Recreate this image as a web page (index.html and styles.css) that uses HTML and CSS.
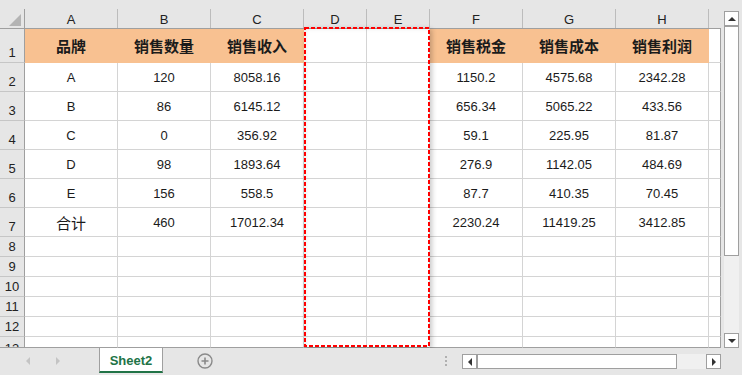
FILE: index.html
```html
<!DOCTYPE html>
<html lang="zh-CN">
<head>
    <meta charset="UTF-8">
    <title>Sheet2</title>
    <link rel="stylesheet" href="styles.css">
</head>
<body>

<div class="app">
    <div class="main">
        <div class="sheet">
            <!-- column letters -->
            <div class="colhead">
                <div class="corner"><span class="corner-tri"></span></div>
                <div>A</div><div>B</div><div>C</div><div>D</div><div>E</div>
                <div>F</div><div>G</div><div>H</div><div></div>
            </div>

            <div class="row r1">
                <div class="rh">1</div>
                <div class="hd">品牌</div>
                <div class="hd">销售数量</div>
                <div class="hd">销售收入</div>
                <div></div><div></div>
                <div class="hd">销售税金</div>
                <div class="hd">销售成本</div>
                <div class="hd">销售利润</div>
                <div></div>
            </div>
            <div class="row">
                <div class="rh">2</div><div>A</div><div>120</div><div>8058.16</div><div></div><div></div>
                <div>1150.2</div><div>4575.68</div><div>2342.28</div><div></div>
            </div>
            <div class="row">
                <div class="rh">3</div><div>B</div><div>86</div><div>6145.12</div><div></div><div></div>
                <div>656.34</div><div>5065.22</div><div>433.56</div><div></div>
            </div>
            <div class="row">
                <div class="rh">4</div><div>C</div><div>0</div><div>356.92</div><div></div><div></div>
                <div>59.1</div><div>225.95</div><div>81.87</div><div></div>
            </div>
            <div class="row">
                <div class="rh">5</div><div>D</div><div>98</div><div>1893.64</div><div></div><div></div>
                <div>276.9</div><div>1142.05</div><div>484.69</div><div></div>
            </div>
            <div class="row">
                <div class="rh">6</div><div>E</div><div>156</div><div>558.5</div><div></div><div></div>
                <div>87.7</div><div>410.35</div><div>70.45</div><div></div>
            </div>
            <div class="row">
                <div class="rh">7</div><div class="cjk">合计</div><div>460</div><div>17012.34</div><div></div><div></div>
                <div>2230.24</div><div>11419.25</div><div>3412.85</div><div></div>
            </div>
            <div class="row sm"><div class="rh">8</div><div></div><div></div><div></div><div></div><div></div><div></div><div></div><div></div><div></div></div>
            <div class="row sm"><div class="rh">9</div><div></div><div></div><div></div><div></div><div></div><div></div><div></div><div></div><div></div></div>
            <div class="row sm"><div class="rh">10</div><div></div><div></div><div></div><div></div><div></div><div></div><div></div><div></div><div></div></div>
            <div class="row sm"><div class="rh">11</div><div></div><div></div><div></div><div></div><div></div><div></div><div></div><div></div><div></div></div>
            <div class="row sm"><div class="rh">12</div><div></div><div></div><div></div><div></div><div></div><div></div><div></div><div></div><div></div></div>
            <div class="row cut"><div class="rh">13</div><div></div><div></div><div></div><div></div><div></div><div></div><div></div><div></div><div></div></div>

            <!-- copied range D:E -->
            <div class="copy-box">
                <svg width="126" height="320" viewBox="0 0 126 320">
                    <rect x="1" y="1" width="124" height="318" fill="none" stroke="#ff0000" stroke-width="2" stroke-dasharray="4 2"/>
                </svg>
            </div>
        </div>

        <div class="vscroll">
            <div class="sb-btn"><span class="tri-up"></span></div>
            <div class="v-thumb"></div>
            <div class="v-track"></div>
            <div class="sb-btn"><span class="tri-down"></span></div>
        </div>
    </div>

    <div class="tabbar">
        <div class="nav">
            <span class="nav-left"></span>
            <span class="nav-right"></span>
        </div>
        <div class="tab">Sheet2</div>
        <div class="add">
            <svg width="16" height="16" viewBox="0 0 16 16">
                <circle cx="8" cy="8" r="7" fill="none" stroke="#8a8a8a" stroke-width="1.4"/>
                <path d="M8 4.5v7M4.5 8h7" stroke="#8a8a8a" stroke-width="1.6"/>
            </svg>
        </div>
        <div class="grip"><span></span><span></span><span></span></div>
        <div class="hscroll">
            <div class="sb-btn"><span class="tri-left"></span></div>
            <div class="h-thumb"></div>
            <div class="h-track"></div>
            <div class="sb-btn"><span class="tri-right"></span></div>
        </div>
    </div>
</div>

</body>
</html>
```

FILE: styles.css
```css
/* Colors */
:root {
    --chrome: #e6e6e6;
    --grid: #d4d4d4;
    --frame: #9f9f9f;
    --head-line: #bcbcbc;
    --peach: #f8c191;
    --excel-green: #217346;
    --cols: 25px 93px 93px 93px 63px 63px 93px 93px 93px 12px;
}

* {
    box-sizing: border-box;
}

body {
    margin: 0;
    background-color: var(--chrome);
    font-family: "Liberation Sans", "Noto Sans CJK SC", sans-serif;
    color: #1b1b1b;
    overflow: hidden;
}

.app {
    width: 742px;
    height: 375px;
    display: flex;
    flex-direction: column;
}

.main {
    display: flex;
    height: 348px;
}

/* Sheet grid */
.sheet {
    position: relative;
    width: 721px;
    height: 348px;
    overflow: hidden;
}

.colhead {
    display: grid;
    grid-template-columns: var(--cols);
    height: 29px;
    border-bottom: 1px solid var(--frame);
}

.colhead > div {
    margin-top: 9px;
    border-right: 1px solid var(--head-line);
    display: flex;
    align-items: center;
    justify-content: center;
    padding-top: 2px;
    font-size: 13px;
    color: #222;
}

.colhead > div:last-child {
    border-right: none;
}

.colhead .corner {
    border-right-color: var(--frame);
    align-items: flex-end;
    justify-content: flex-end;
    padding: 0 3px 2px 0;
}

.corner-tri {
    width: 0;
    height: 0;
    border-left: 12px solid transparent;
    border-bottom: 12px solid #b4b4b4;
}

.row {
    display: grid;
    grid-template-columns: var(--cols);
    height: 29px;
}

.row > div {
    background-color: #fff;
    border-right: 1px solid var(--grid);
    border-bottom: 1px solid var(--grid);
    display: flex;
    align-items: center;
    justify-content: center;
    font-size: 13px;
    white-space: nowrap;
}

.row > div:last-child {
    border-right-color: var(--frame);
}

.row > .rh {
    background-color: var(--chrome);
    border-right-color: var(--frame);
    border-bottom-color: #c6c6c6;
    align-items: flex-end;
    padding-bottom: 2px;
    color: #222;
}

.r1 {
    height: 34px;
}

.row > .hd {
    background-color: var(--peach);
    border-color: var(--peach);
    font-family: "Noto Sans CJK SC", sans-serif;
    font-weight: 700;
    font-size: 15px;
}

.row > .cjk {
    font-family: "Noto Sans CJK SC", sans-serif;
    font-size: 15px;
}

.sm {
    height: 20px;
}

.cut {
    height: 11px;
}

.cut > div {
    overflow: hidden;
    border-bottom-color: var(--frame);
}

.cut > .rh {
    border-bottom-color: var(--frame);
    align-items: flex-start;
    padding: 4px 0 0;
}

/* marching border around copied columns */
.copy-box {
    position: absolute;
    left: 304px;
    top: 27px;
    width: 126px;
    height: 320px;
    box-shadow: 2px 2px 5px rgba(0, 0, 0, 0.22), inset 3px 3px 5px -2px rgba(0, 0, 0, 0.12);
}

.copy-box svg {
    display: block;
}

/* Scrollbars */
.vscroll {
    width: 21px;
    padding: 11px 3px 0;
    display: flex;
    flex-direction: column;
}

.sb-btn {
    width: 15px;
    height: 15px;
    background-color: #fff;
    border: 1px solid var(--frame);
    display: flex;
    align-items: center;
    justify-content: center;
    flex-shrink: 0;
}

.v-thumb {
    height: 230px;
    background-color: #fff;
    border: 1px solid var(--frame);
}

.v-track {
    height: 77px;
    background-color: #f0f0f0;
}

.tri-up, .tri-down, .tri-left, .tri-right {
    width: 0;
    height: 0;
}

.tri-up {
    border-left: 4px solid transparent;
    border-right: 4px solid transparent;
    border-bottom: 4px solid #333;
}

.tri-down {
    border-left: 4px solid transparent;
    border-right: 4px solid transparent;
    border-top: 4px solid #333;
}

.tri-left {
    border-top: 4px solid transparent;
    border-bottom: 4px solid transparent;
    border-right: 4px solid #333;
}

.tri-right {
    border-top: 4px solid transparent;
    border-bottom: 4px solid transparent;
    border-left: 4px solid #333;
}

/* Sheet tabs */
.tabbar {
    height: 27px;
    display: flex;
    align-items: flex-start;
}

.nav {
    width: 99px;
    height: 25px;
    display: flex;
    align-items: center;
    padding-left: 26px;
    gap: 26px;
}

.nav-left {
    border-top: 4px solid transparent;
    border-bottom: 4px solid transparent;
    border-right: 4px solid #c4c4c4;
}

.nav-right {
    border-top: 4px solid transparent;
    border-bottom: 4px solid transparent;
    border-left: 4px solid #c4c4c4;
}

.tab {
    width: 64px;
    height: 25px;
    background-color: #fff;
    border-left: 1px solid var(--frame);
    border-right: 1px solid var(--frame);
    border-bottom: 2px solid var(--excel-green);
    color: var(--excel-green);
    font-weight: bold;
    font-size: 13px;
    display: flex;
    align-items: center;
    justify-content: center;
    padding-top: 1px;
}

.add {
    margin: 5px 0 0 34px;
    width: 16px;
    height: 16px;
}

.add svg {
    display: block;
}

.grip {
    margin: 8px 15px 0 auto;
    display: flex;
    flex-direction: column;
    gap: 2px;
}

.grip span {
    width: 2px;
    height: 2px;
    background-color: #b0b0b0;
}

.hscroll {
    display: flex;
    margin: 6px 21px 0 0;
    height: 15px;
}

.h-thumb {
    width: 200px;
    background-color: #fff;
    border: 1px solid var(--frame);
}

.h-track {
    width: 29px;
    background-color: #f0f0f0;
}
```
